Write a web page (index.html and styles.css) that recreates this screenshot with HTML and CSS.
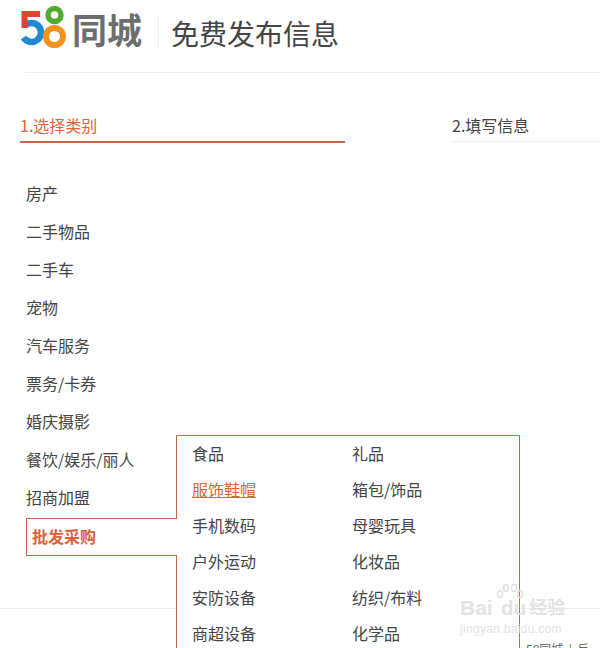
FILE: index.html
```html
<!DOCTYPE html>
<html>
<head>
    <meta charset="utf-8">
    <title>免费发布信息</title>
    <link rel="stylesheet" href="styles.css">
</head>
<body>
    <div class="page">
        <!-- Cabecera -->
        <div class="header">
            <svg class="logo-58" width="48" height="44" viewBox="0 0 48 44">
                <path d="M5.5 21A9.500 9.500 0 1 1 4.500 32.600" fill="none" stroke="#1e88d2" stroke-width="6.500"/>
                <path d="M21 9H5.500V23" fill="none" stroke="#e8412f" stroke-width="6"/>
                <circle cx="35.500" cy="10" r="6.500" fill="none" stroke="#55ab2e" stroke-width="5.500"/>
                <circle cx="35.500" cy="31.500" r="8.500" fill="none" stroke="#f5921e" stroke-width="6"/>
            </svg>
            <span class="logo-text">同城</span>
            <span class="header-sep"></span>
            <h1 class="header-title">免费发布信息</h1>
        </div>

        <!-- Pasos -->
        <div class="steps">
            <div class="step step-on">1.选择类别</div>
            <div class="step step-off">2.填写信息</div>
        </div>

        <!-- Categorias -->
        <ul class="cats">
            <li>房产</li>
            <li>二手物品</li>
            <li>二手车</li>
            <li>宠物</li>
            <li>汽车服务</li>
            <li>票务/卡券</li>
            <li>婚庆摄影</li>
            <li>餐饮/娱乐/丽人</li>
            <li>招商加盟</li>
            <li class="cat-on">批发采购</li>
        </ul>

        <div class="submenu">
            <a>食品</a><a>礼品</a>
            <a class="sub-on">服饰鞋帽</a><a>箱包/饰品</a>
            <a>手机数码</a><a>母婴玩具</a>
            <a>户外运动</a><a>化妆品</a>
            <a>安防设备</a><a>纺织/布料</a>
            <a>商超设备</a><a>化学品</a>
        </div>

        <div class="footer">
            <span class="footer-links">58同城 &nbsp;|&nbsp; 反</span>
        </div>

        <!-- Marca de agua -->
        <div class="watermark">
            <svg class="wm-paw" width="28" height="20" viewBox="0 0 28 20">
                <g fill="none" stroke="#e2e2e2" stroke-width="1.500">
                    <ellipse cx="4" cy="11" rx="2.500" ry="3.500"/>
                    <ellipse cx="10" cy="5" rx="2.500" ry="3.500"/>
                    <ellipse cx="18" cy="5" rx="2.500" ry="3.500"/>
                    <ellipse cx="24" cy="11" rx="2.500" ry="3.500"/>
                </g>
            </svg>
            <div class="wm-main"><span>Bai</span><span class="wm-du">du</span><span class="wm-cn">经验</span></div>
            <div class="wm-sub">jingyan.baidu.com</div>
        </div>
    </div>
</body>
</html>
```

FILE: styles.css
```css
html, body {
    margin: 0;
    padding: 0;
    background-color: #fff;
}

body {
    font-family: "Noto Sans CJK SC", "Liberation Sans", sans-serif;
    color: #444;
}

.page {
    position: relative;
    width: 600px;
    height: 648px;
    overflow: hidden;
}

/* Cabecera */
.header {
    display: flex;
    align-items: flex-start;
    height: 73px;
    margin-left: 25px;
    border-bottom: 1px solid #eee;
    box-sizing: border-box;
}

.logo-58 {
    flex: none;
    margin-left: -6px;
    margin-top: 5px;
}

.logo-text {
    font-size: 35px;
    line-height: 40px;
    font-weight: 700;
    color: #6e6e6e;
    margin-left: 5px;
    margin-top: 9px;
}

.header-sep {
    width: 1px;
    height: 32px;
    background-color: #eee;
    margin-left: 16px;
    margin-top: 16px;
}

.header-title {
    margin: 13px 0 0 12px;
    font-size: 28px;
    line-height: 40px;
    font-weight: 400;
    color: #444;
}

/* Pasos */
.steps {
    display: flex;
    margin-top: 39px;
    margin-left: 20px;
}

.step {
    font-size: 16px;
    line-height: 26px;
    height: 29px;
}

.step-on {
    width: 325px;
    color: #d9643a;
    border-bottom: 2px solid #c8664a;
}

.step-off {
    width: 148px;
    margin-left: 107px;
    border-bottom: 1px solid #eee;
}

/* Categorias */
.cats {
    list-style: none;
    margin: 31px 0 0 26px;
    padding: 0;
    width: 151px;
}

.cats li {
    height: 38px;
    line-height: 38px;
    font-size: 16px;
    white-space: nowrap;
}

.cats .cat-on {
    position: relative;
    z-index: 2;
    box-sizing: border-box;
    margin-top: 2px;
    height: 38px;
    line-height: 34px;
    padding-left: 5px;
    background-color: #fff;
    color: #d9643a;
    font-weight: 700;
    border: 1px solid #c8664a;
    border-right: none;
}

.submenu {
    position: absolute;
    left: 176px;
    top: 435px;
    z-index: 1;
    width: 344px;
    height: 240px;
    box-sizing: border-box;
    padding: 0 0 0 15px;
    background-color: #fff;
    border: 1px solid #c8664a;
    display: grid;
    grid-template-columns: 160px 160px;
    grid-auto-rows: 36px;
    font-size: 16px;
    line-height: 34px;
}

.sub-on {
    color: #d9643a;
    text-decoration: underline;
}

.footer {
    position: absolute;
    left: 0;
    right: 0;
    top: 608px;
    height: 40px;
    border-top: 1px solid #eee;
}

.footer-links {
    position: absolute;
    left: 526px;
    top: 32px;
    font-size: 12px;
    line-height: 16px;
    white-space: nowrap;
    color: #666;
}

/* Marca de agua */
.watermark {
    position: absolute;
    left: 460px;
    top: 583px;
    width: 108px;
    z-index: 3;
    color: #e2e2e2;
    pointer-events: none;
}

.wm-paw {
    position: absolute;
    left: 36px;
    top: 0;
}

.wm-main {
    display: flex;
    align-items: center;
    margin-top: 13px;
    font-family: "Liberation Sans", "Noto Sans CJK SC", sans-serif;
    font-size: 21px;
    line-height: 24px;
    font-weight: 700;
}

.wm-du {
    margin-left: 8px;
}

.wm-cn {
    margin-left: 3px;
    font-size: 18px;
}

.wm-sub {
    font-family: "Liberation Sans", sans-serif;
    font-size: 12px;
    line-height: 14px;
    margin-top: 2px;
    letter-spacing: 0.3px;
}
```
